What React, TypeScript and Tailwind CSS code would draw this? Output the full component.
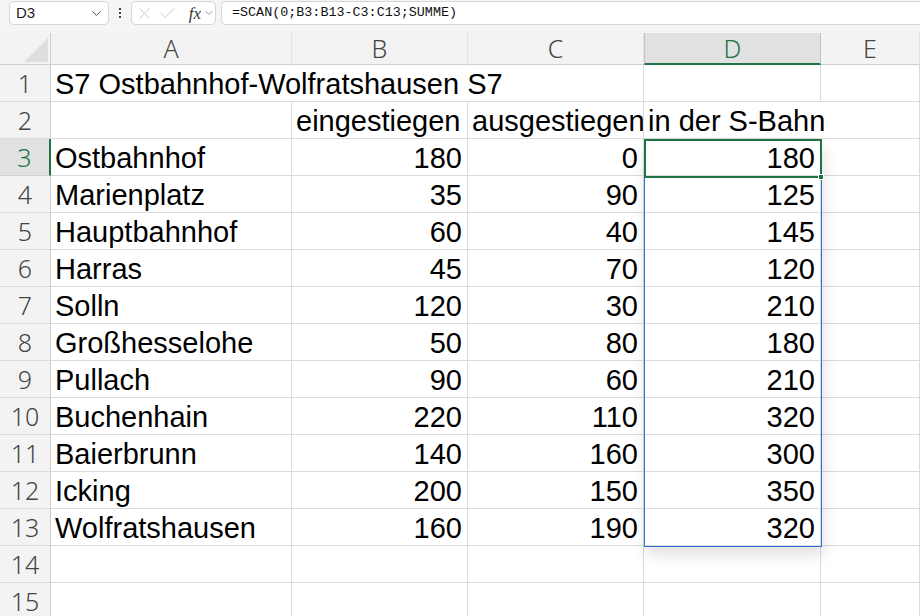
import { ChevronDown, X, Check } from "lucide-react"

const cols = ["A", "B", "C", "D", "E"]

type Row = { a: string; b: string; c: string; d: string }

const rows: Row[] = [
  { a: "S7 Ostbahnhof-Wolfratshausen S7", b: "", c: "", d: "" },
  { a: "", b: "eingestiegen", c: "ausgestiegen", d: "in der S-Bahn" },
  { a: "Ostbahnhof", b: "180", c: "0", d: "180" },
  { a: "Marienplatz", b: "35", c: "90", d: "125" },
  { a: "Hauptbahnhof", b: "60", c: "40", d: "145" },
  { a: "Harras", b: "45", c: "70", d: "120" },
  { a: "Solln", b: "120", c: "30", d: "210" },
  { a: "Großhesselohe", b: "50", c: "80", d: "180" },
  { a: "Pullach", b: "90", c: "60", d: "210" },
  { a: "Buchenhain", b: "220", c: "110", d: "320" },
  { a: "Baierbrunn", b: "140", c: "160", d: "300" },
  { a: "Icking", b: "200", c: "150", d: "350" },
  { a: "Wolfratshausen", b: "160", c: "190", d: "320" },
  { a: "", b: "", c: "", d: "" },
  { a: "", b: "", c: "", d: "" },
]

const cellFont = { fontFamily: '"Liberation Sans", Arial, sans-serif' }
const headFont = { fontFamily: '"Noto Sans", "DejaVu Sans", sans-serif' }

// text spills into the empty cell on its right, as in Excel (gridline hidden)
function Cell({ text, num, overflow, open }: { text: string; num?: boolean; overflow?: boolean; open?: boolean }) {
  return (
    <div
      className={
        "h-[37px] border-b border-[#dadada] flex items-center pt-[2px] text-[29px] leading-none text-black whitespace-nowrap " +
        (open ? "border-r border-r-transparent " : "border-r ") +
        (num ? "justify-end pr-[5px] " : "pl-[4px] ") +
        (overflow ? "overflow-visible relative z-10 " : "overflow-hidden ")
      }
      style={cellFont}
    >
      {text}
    </div>
  )
}

export default function App() {
  return (
    <div className="w-[920px] h-[616px] overflow-hidden bg-white relative select-none">
      {/* formula bar */}
      <div className="h-[33px] bg-[#f5f5f5] flex items-start pt-[1px] pl-[9px] gap-[5px]">
        <div className="w-[100px] h-[24px] bg-white border border-[#d6d6d6] rounded-[5px] flex items-center justify-between pl-[6px] pr-[4px]">
          <span className="text-[15px] text-[#222]" style={{ fontFamily: '"Liberation Sans", sans-serif' }}>D3</span>
          <ChevronDown size={15} strokeWidth={1.6} className="text-[#444]" />
        </div>
        <div className="w-[12px] h-[24px] flex flex-col items-center justify-center gap-[2px]">
          <span className="w-[2px] h-[2px] bg-[#444]" />
          <span className="w-[2px] h-[2px] bg-[#444]" />
          <span className="w-[2px] h-[2px] bg-[#444]" />
        </div>
        <div className="w-[85px] h-[24px] bg-white border border-[#d6d6d6] rounded-[5px] flex items-center pl-[3px] gap-[4px]">
          <X size={19} strokeWidth={1} className="text-[#bdbdbd]" />
          <Check size={19} strokeWidth={1} className="text-[#bdbdbd]" />
          <span className="ml-[8px] text-[17px] italic text-[#333] leading-none" style={{ fontFamily: '"Liberation Serif", serif' }}>fx</span>
          <ChevronDown size={12} strokeWidth={1.4} className="text-[#666] -ml-[2px]" />
        </div>
        <div className="flex-1 h-[24px] bg-white border border-[#d6d6d6] border-r-0 rounded-l-[5px] flex items-center pl-[10px]">
          <span className="text-[13.4px] text-[#111]" style={{ fontFamily: '"Liberation Mono", monospace' }}>=SCAN(0;B3:B13-C3:C13;SUMME)</span>
        </div>
      </div>

      {/* sheet grid */}
      <div className="grid grid-cols-[51px_241px_176px_176px_177px_99px]">
        {/* column header row */}
        <div className="h-[32px] bg-[#f3f3f3] border-b border-r border-[#cfcfcf] relative">
          <svg width="51" height="32" className="absolute left-0 top-0">
            <polygon points="24,29 48,29 48,5" fill="#dedede" />
          </svg>
        </div>
        {cols.map((c) => {
          const sel = c === "D"
          return (
            <div
              key={c}
              className={
                "h-[32px] flex items-center justify-center text-[25px] font-light leading-none " +
                (sel
                  ? "bg-[#e1e1e1] text-[#217346] border-b-2 border-[#217346] border-x border-x-[#c4c4c4]"
                  : "bg-[#f3f3f3] text-[#444] border-b border-r border-[#e2e2e2] border-b-[#cfcfcf]")
              }
              style={headFont}
            >
              {c}
            </div>
          )
        })}

        {rows.map((r, i) => {
          const n = i + 1
          const sel = n === 3
          return [
            <div
              key={"h" + n}
              className={
                "h-[37px] flex items-center justify-center text-[25px] font-light leading-none border-b " +
                (sel
                  ? "bg-[#e1e1e1] text-[#217346] border-r-2 border-r-[#217346] border-b-[#d0d0d0]"
                  : "bg-[#f3f3f3] text-[#444] border-r border-r-[#cfcfcf] border-b-[#dadada]")
              }
              style={headFont}
            >
              {n}
            </div>,
            <Cell key={"a" + n} text={r.a} overflow={n === 1} open={n === 1} />,
            <Cell key={"b" + n} text={r.b} num={n > 2} open={n === 1} />,
            <Cell key={"c" + n} text={r.c} num={n > 2} />,
            <Cell key={"d" + n} text={r.d} num={n > 2} overflow={n === 2} open={n === 2} />,
            <Cell key={"e" + n} text="" />,
          ]
        })}
      </div>

      {/* spill range outline */}
      <div className="absolute left-[644px] top-[139px] w-[178px] h-[408px] border border-[#2f6fd6] shadow-[2px_8px_14px_rgba(0,0,0,0.12)] pointer-events-none z-20" />
      {/* active cell */}
      <div className="absolute left-[644px] top-[139px] w-[178px] h-[39px] border-2 border-[#217346] pointer-events-none z-30" />
      <div className="absolute left-[818px] top-[174px] w-[6px] h-[6px] bg-[#217346] border border-white z-30" />
    </div>
  )
}
